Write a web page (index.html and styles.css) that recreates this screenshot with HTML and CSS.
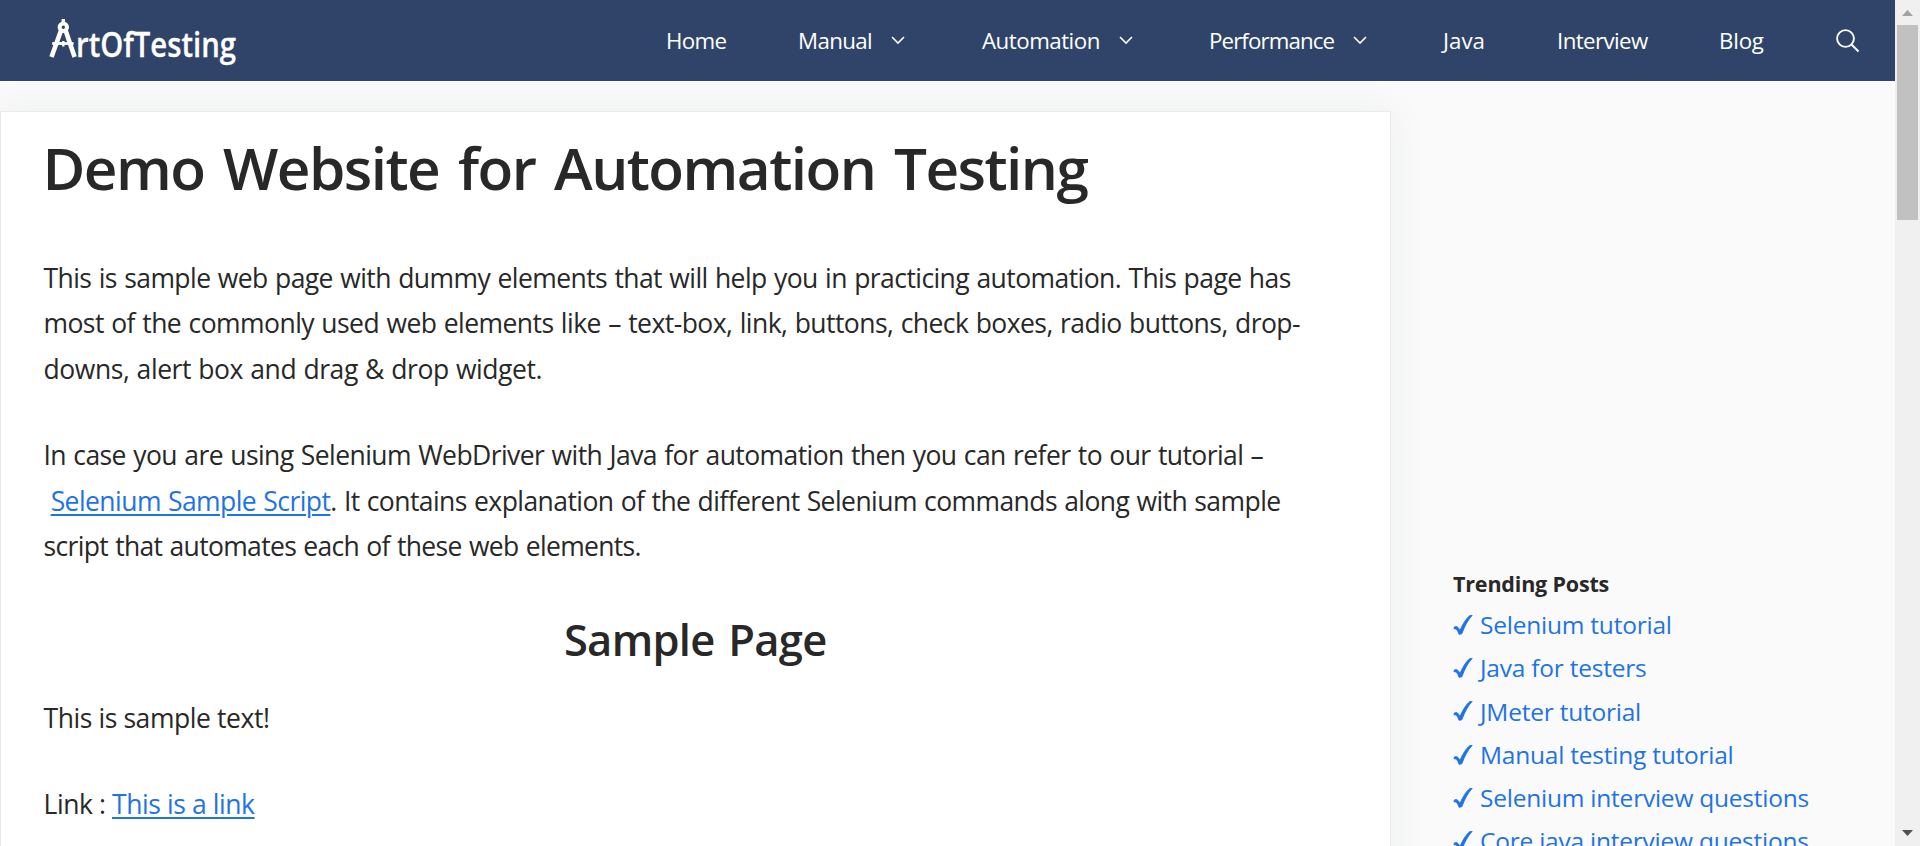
FILE: index.html
```
<!DOCTYPE html>
<html lang="en">
<head>
<meta charset="utf-8">
<title>Demo Website for Automation Testing</title>
<link rel="stylesheet" href="styles.css">
</head>
<body>
<div class="page">
  <div class="view">
    <header class="header">
      <svg class="logo" width="200" height="70" viewBox="40 10 200 70" role="img" aria-label="ArtOfTesting">
        <g fill="none" stroke="#fff">
          <path d="M63.3 19v5" stroke-width="3.4"/>
          <circle cx="63.3" cy="27.3" r="3.7" stroke-width="4"/>
          <path d="M61 30.500L51.500 57M65.600 30.500L74.600 57" stroke-width="4.600"/>
          <path d="M52.200 43.500H73.600" stroke-width="2.800"/>
          <path d="M63.300 41v5.500" stroke-width="2.400"/>
        </g>
        <text class="logo-text" x="76" y="56.500" textLength="160" lengthAdjust="spacingAndGlyphs">rtOfTesting</text>
      </svg>
      <nav class="nav">
        <a class="nav-home">Home</a>
        <a class="nav-manual">Manual <svg class="chev" viewBox="0 0 14 9"><path d="M1 1l6 6 6-6"/></svg></a>
        <a class="nav-auto">Automation <svg class="chev" viewBox="0 0 14 9"><path d="M1 1l6 6 6-6"/></svg></a>
        <a class="nav-perf">Performance <svg class="chev" viewBox="0 0 14 9"><path d="M1 1l6 6 6-6"/></svg></a>
        <a>Java</a>
        <a class="nav-int">Interview</a>
        <a class="nav-blog">Blog</a>
        <a><svg class="search" viewBox="0 0 24 24"><circle cx="9.500" cy="9.500" r="8.400"/><path d="M15.500 15.500l7 7"/></svg></a>
      </nav>
    </header>
    <div class="content">
      <main class="article">
        <h1>Demo Website for Automation Testing</h1>
        <p><span class="l1">This is sample web page with dummy elements that will help you in practicing automation. This page has</span><br>
        <span class="l2">most of the commonly used web elements like – text-box, link, buttons, check boxes, radio buttons, drop-</span><br>
        <span class="l3">downs, alert box and drag &amp; drop widget.</span></p>
        <p><span class="l4">In case you are using Selenium WebDriver with Java for automation then you can refer to our tutorial –</span><br>
        <span class="l5">&nbsp;<a class="link">Selenium Sample Script</a>. It contains explanation of the different Selenium commands along with sample</span><br>
        <span class="l6">script that automates each of these web elements.</span></p>
        <h2>Sample Page</h2>
        <p>This is sample text!</p>
        <p>Link : <a class="link">This is a link</a></p>
      </main>
      <aside class="sidebar">
        <h3>Trending Posts</h3>
        <ul>
          <li><svg class="check" viewBox="0 0 20 20"><path d="M1 12.500C3 10.500 5 11.500 7 15.500C10 8.500 13.500 3 17 .5L19.200 .3C14.500 5.500 11.500 11.500 8.800 18.800L6 19.300C4.800 15.500 3.500 13.500 1 13.800Z"/></svg>Selenium tutorial</li>
          <li><svg class="check" viewBox="0 0 20 20"><path d="M1 12.500C3 10.500 5 11.500 7 15.500C10 8.500 13.500 3 17 .5L19.200 .3C14.500 5.500 11.500 11.500 8.800 18.800L6 19.300C4.800 15.500 3.500 13.500 1 13.800Z"/></svg>Java for testers</li>
          <li><svg class="check" viewBox="0 0 20 20"><path d="M1 12.500C3 10.500 5 11.500 7 15.500C10 8.500 13.500 3 17 .5L19.200 .3C14.500 5.500 11.500 11.500 8.800 18.800L6 19.300C4.800 15.500 3.500 13.500 1 13.800Z"/></svg>JMeter tutorial</li>
          <li><svg class="check" viewBox="0 0 20 20"><path d="M1 12.500C3 10.500 5 11.500 7 15.500C10 8.500 13.500 3 17 .5L19.200 .3C14.500 5.500 11.500 11.500 8.800 18.800L6 19.300C4.800 15.500 3.500 13.500 1 13.800Z"/></svg>Manual testing tutorial</li>
          <li><svg class="check" viewBox="0 0 20 20"><path d="M1 12.500C3 10.500 5 11.500 7 15.500C10 8.500 13.500 3 17 .5L19.200 .3C14.500 5.500 11.500 11.500 8.800 18.800L6 19.300C4.800 15.500 3.500 13.500 1 13.800Z"/></svg>Selenium interview questions</li>
          <li><svg class="check" viewBox="0 0 20 20"><path d="M1 12.500C3 10.500 5 11.500 7 15.500C10 8.500 13.500 3 17 .5L19.200 .3C14.500 5.500 11.500 11.500 8.800 18.800L6 19.300C4.800 15.500 3.500 13.500 1 13.800Z"/></svg>Core java interview questions</li>
        </ul>
      </aside>
    </div>
  </div>
  <div class="scrollbar">
    <svg class="arrow" viewBox="0 0 25 25"><path fill="#a3a3a3" d="M7 16L12.500 10L18 16Z"/></svg>
    <div class="thumb"></div>
    <svg class="arrow" viewBox="0 0 25 25"><path fill="#505050" d="M7 9L12.500 15L18 9Z"/></svg>
  </div>
</div>
</body>
</html>
```
FILE: styles.css
```
* { box-sizing: border-box; }
body { margin: 0; overflow: hidden; font-family: "Open Sans", "Noto Sans", sans-serif; color: #282828; }
.page { display: flex; height: 846px; overflow: hidden; }
.view { width: 1895px; height: 846px; overflow: hidden; background: #fafafa; display: flex; flex-direction: column; }

.header { flex: none; height: 81px; background: #2f4468; display: flex; padding-left: 40px; position: relative; z-index: 1; }
.logo { flex: none; margin: 10px 426px 0 0; overflow: visible; }
.logo-text { font-size: 34px; font-weight: 600; fill: #fff; stroke: #fff; stroke-width: .3px; }
.nav { display: grid; grid-template-columns: 132px 184px 227px 234px 114px 162px 117px 59px; }
.nav a { display: flex; align-items: center; height: 80px; color: #fff; font-size: 22.3px; white-space: pre; }
.nav-home { letter-spacing: -.7px; }
.nav-manual { letter-spacing: -.65px; }
.nav-auto { letter-spacing: -.5px; }
.nav-perf { letter-spacing: -.9px; }
.nav-int { letter-spacing: -.6px; }
.nav-blog { letter-spacing: -.2px; }
.chev { width: 14px; height: 9px; margin: 1px 0 0 14px; }
.chev path { fill: none; stroke: #fff; stroke-width: 1.6; }
.search { width: 24px; height: 24px; margin-top: 2px; }
.search circle, .search path { fill: none; stroke: #fff; stroke-width: 1.9; }

.content { flex: 1; min-height: 0; display: flex; padding-top: 30px; }
.article { flex: none; width: 1391px; height: 900px; padding: 20px 43px 0 42.5px; background: #fff; border: 1px solid #e8eaec; box-shadow: 0 0 40px rgba(40, 55, 55, .06); white-space: nowrap; }
h1 { margin: 0 0 52.500px; font-size: 58.5px; line-height: 71px; font-weight: 600; letter-spacing: -1.55px; word-spacing: 5px; text-indent: -1px; }
p { margin: 0 0 41px; font-size: 26.5px; line-height: 45.6px; letter-spacing: -.42px; }
h2 { margin: 43px 0 28.500px; font-size: 43.5px; line-height: 54px; font-weight: 600; letter-spacing: -.7px; word-spacing: 3px; text-align: center; }
.l1 { letter-spacing: -.57px; word-spacing: 1px; }
.l2 { letter-spacing: -.55px; word-spacing: 1px; }
.l3 { letter-spacing: -.43px; word-spacing: .8px; }
.l4 { letter-spacing: -.58px; word-spacing: 1px; }
.l5 { letter-spacing: -.56px; word-spacing: .8px; }
.l6 { letter-spacing: -.66px; word-spacing: .9px; }
.link { color: #1e73e5; text-decoration: underline; text-decoration-thickness: 2px; text-underline-offset: 3px; }

.sidebar { padding: 453px 0 0 62px; white-space: nowrap; }
h3 { margin: 0 0 -1px; font-size: 21.5px; line-height: 40px; font-weight: 700; letter-spacing: -.18px; }
ul { margin: 0; padding: 0; list-style: none; }
li { display: flex; align-items: center; height: 43.3px; font-size: 24.5px; line-height: 43.3px; letter-spacing: -.23px; color: #1e73e5; }
.check { width: 20px; height: 20px; margin-right: 7px; }
.check path { fill: #1e73e5; stroke: #1e73e5; stroke-width: .9; }

.scrollbar { width: 25px; height: 846px; background: #f0f0f0; display: flex; flex-direction: column; align-items: center; }
.arrow { width: 25px; height: 25px; flex: none; }
.thumb { width: 21px; height: 195px; margin-bottom: 601px; background: #c1c1c1; flex: none; }
```
